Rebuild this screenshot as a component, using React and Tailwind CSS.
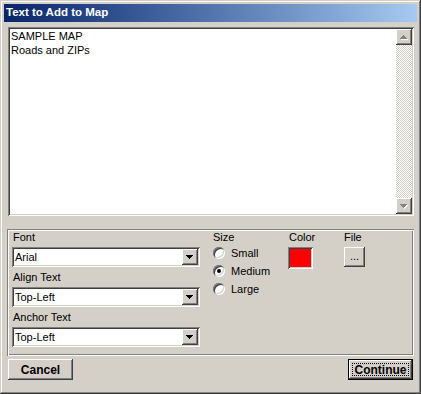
import React from 'react'

const RAISED = 'shadow-[inset_-1px_-1px_#404040,inset_1px_1px_#ffffff,inset_-2px_-2px_#808080,inset_2px_2px_#d4d0c8]'
const SUNKEN = 'shadow-[inset_1px_1px_#808080,inset_-1px_-1px_#ffffff,inset_2px_2px_#404040,inset_-2px_-2px_#d4d0c8]'

// pixel triangle, 7 wide x 4 tall
function Tri({ up, color = '#000', shadow }) {
  const rows = [0, 1, 2, 3]
  return (
    <svg width="8" height="5" viewBox="0 0 8 5" shapeRendering="crispEdges">
      {shadow && rows.map(i => {
        const r = up ? 3 - i : i
        return <rect key={'s' + i} x={r + 1} y={i + 1} width={7 - 2 * r} height="1" fill={shadow} />
      })}
      {rows.map(i => {
        const r = up ? 3 - i : i
        return <rect key={i} x={r} y={i} width={7 - 2 * r} height="1" fill={color} />
      })}
    </svg>
  )
}

function Combo({ value }) {
  return (
    <div className={`h-[20px] w-[188px] bg-white ${SUNKEN} flex p-[2px]`}>
      <div className="flex-1 pl-[1px] leading-[16px]">{value}</div>
      <div className={`w-[16px] h-[16px] bg-[#d4d0c8] ${RAISED} flex items-center justify-center`}>
        <Tri />
      </div>
    </div>
  )
}

function Radio({ label, checked }) {
  return (
    <div className="h-[18px] flex items-center">
      <div className={`w-[12px] h-[12px] rounded-full bg-white ${SUNKEN} flex items-center justify-center`}>
        {checked && <div className="w-[4px] h-[4px] rounded-full bg-black" />}
      </div>
      <span className="ml-[6px]">{label}</span>
    </div>
  )
}

export default function App() {
  return (
    <div className="w-[421px] h-[394px] bg-[#d4d0c8] p-1 flex flex-col text-[11px] text-black font-['Liberation_Sans',Arial,sans-serif] shadow-[inset_-1px_-1px_#404040,inset_1px_1px_#d4d0c8,inset_-2px_-2px_#808080,inset_2px_2px_#ffffff]">
      {/* title bar */}
      <div className="h-[18px] flex items-center pl-[2px] text-white text-[11.5px] font-bold bg-gradient-to-r from-[#0a246a] to-[#a6caf0]">
        Text to Add to Map
      </div>

      {/* text area */}
      <div className={`mt-[5px] ml-[4px] w-[406px] h-[189px] bg-white ${SUNKEN} flex p-[2px]`}>
        <div className="flex-1 pl-[1px] leading-[14px]">
          <div>SAMPLE MAP</div>
          <div>Roads and ZIPs</div>
        </div>
        <div className="w-[16px] flex flex-col">
          <div className={`h-[16px] bg-[#d4d0c8] ${RAISED} flex items-center justify-center`}>
            <Tri up color="#808080" shadow="#ffffff" />
          </div>
          <div className="flex-1 bg-[image:repeating-conic-gradient(#d4d0c8_0%_25%,#ffffff_0%_50%)] bg-[length:2px_2px]" />
          <div className={`h-[16px] bg-[#d4d0c8] ${RAISED} flex items-center justify-center`}>
            <Tri color="#808080" shadow="#ffffff" />
          </div>
        </div>
      </div>

      {/* options group */}
      <div className="mt-[13px] ml-[3px] w-[407px] h-[127px] flex px-[5px] pt-[2px] shadow-[inset_1px_1px_#808080,inset_-1px_-1px_#ffffff,inset_2px_2px_#ffffff,inset_-2px_-2px_#808080]">
        <div className="w-[188px] flex flex-col">
          <div className="h-[13px] leading-[13px] pl-[1px]">Font</div>
          <div className="mt-[3px]"><Combo value="Arial" /></div>
          <div className="mt-[4px] h-[13px] leading-[13px] pl-[1px]">Align Text</div>
          <div className="mt-[3px]"><Combo value="Top-Left" /></div>
          <div className="mt-[4px] h-[13px] leading-[13px] pl-[1px]">Anchor Text</div>
          <div className="mt-[3px]"><Combo value="Top-Left" /></div>
        </div>

        <div className="ml-[13px] w-[75px] flex flex-col">
          <div className="h-[13px] leading-[13px]">Size</div>
          <Radio label="Small" />
          <Radio label="Medium" checked />
          <Radio label="Large" />
        </div>

        <div className="w-[56px] flex flex-col">
          <div className="h-[13px] leading-[13px] pl-[1px]">Color</div>
          <div className={`mt-[3px] w-[25px] h-[22px] bg-[#ff0000] ${SUNKEN}`} />
        </div>

        <div className="flex flex-col">
          <div className="h-[13px] leading-[13px]">File</div>
          <div className={`mt-[3px] w-[21px] h-[20px] bg-[#d4d0c8] ${RAISED} flex items-center justify-center leading-none pb-[2px]`}>
            ...
          </div>
        </div>
      </div>

      {/* buttons */}
      <div className="mt-[3px] px-[4px] flex justify-between">
        <button className={`w-[65px] h-[21px] bg-[#d4d0c8] ${RAISED} font-bold text-[12px] flex items-center justify-center`}>
          Cancel
        </button>
        <button className="w-[65px] h-[21px] border border-black bg-[#d4d0c8] p-0 font-bold text-[12px]">
          <div className={`w-full h-full ${RAISED} p-[3px]`}>
            <div className="w-full h-full border border-dotted border-black flex items-center justify-center leading-none">
              Continue
            </div>
          </div>
        </button>
      </div>
    </div>
  )
}
